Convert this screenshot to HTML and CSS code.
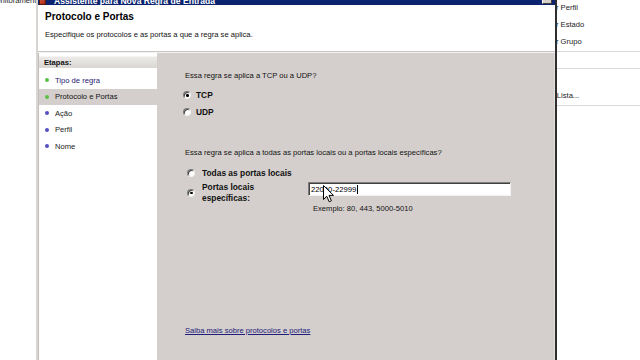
FILE: index.html
```html
<!DOCTYPE html>
<html lang="pt-BR">
<head>
<meta charset="utf-8">
<title>Assistente para Nova Regra de Entrada</title>
<link rel="stylesheet" href="styles.css">
</head>
<body>
<div class="desktop">
  <div class="bgwin">
    <div class="bg-main"><span class="bg-title">Monitoramento</span></div>
    <div class="bg-pane">
      <div class="pane-group g1">
        <div class="pane-item">Filtrar por Perfil</div>
        <div class="pane-item">Filtrar por Estado</div>
        <div class="pane-item">Filtrar por Grupo</div>
      </div>
      <div class="pane-group g2">
        <div class="pane-item">Exibir</div>
      </div>
      <div class="pane-group g3">
        <div class="pane-item">Atualizar</div>
        <div class="pane-item">Exportar Lista...</div>
      </div>
    </div>
  </div>

  <div class="dialog">
    <div class="titlebar">
      <span class="ticon"></span>
      <span class="ttext">Assistente para Nova Regra de Entrada</span>
      <span class="tclose">x</span>
    </div>
    <div class="header">
      <div class="h-title">Protocolo e Portas</div>
      <div class="h-desc">Especifique os protocolos e as portas a que a regra se aplica.</div>
    </div>
    <div class="body">
      <div class="steps">
        <div class="steps-head">Etapas:</div>
        <ul class="steps-list">
          <li class="step done link"><span class="dot"></span>Tipo de regra</li>
          <li class="step done current"><span class="dot"></span>Protocolo e Portas</li>
          <li class="step"><span class="dot"></span>Ação</li>
          <li class="step"><span class="dot"></span>Perfil</li>
          <li class="step"><span class="dot"></span>Nome</li>
        </ul>
      </div>
      <div class="main">
        <p class="question">Essa regra se aplica a TCP ou a UDP?</p>
        <div class="radio-group g-proto">
          <div class="radio-row"><span class="radio checked"></span><span class="rlabel">TCP</span></div>
          <div class="radio-row"><span class="radio"></span><span class="rlabel">UDP</span></div>
        </div>
        <p class="question q2">Essa regra se aplica a todas as portas locais ou a portas locais específicas?</p>
        <div class="ports">
          <div class="radio-row r-all"><span class="radio"></span><span class="rlabel">Todas as portas locais</span></div>
          <div class="port-grid">
            <div class="radio-row r-spec"><span class="radio checked"></span><span class="rlabel">Portas locais<br>específicas:</span></div>
            <div class="field">
              <div class="input"><span class="itext">22000-22999</span><span class="caret"></span></div>
              <div class="example">Exemplo: 80, 443, 5000-5010</div>
              <svg class="pointer" width="12" height="18" viewBox="0 0 12 18"><path d="M0.5 0.5 L0.5 14.5 L3.8 11.3 L6.2 16.8 L8.4 15.8 L6 10.4 L10.5 10.4 Z" fill="#fff" stroke="#000" stroke-width="1" stroke-linejoin="miter"/></svg>
            </div>
          </div>
        </div>
        <a class="learn" href="#">Saiba mais sobre protocolos e portas</a>
      </div>
    </div>
  </div>
</div>
</body>
</html>
```
FILE: styles.css
```css
* { box-sizing: border-box; }
html, body { margin: 0; padding: 0; }
body {
  width: 640px;
  height: 360px;
  overflow: hidden;
  background: #fff;
  font-family: "Liberation Sans", Arial, sans-serif;
  font-size: 7.6px;
  color: #111;
}
.desktop {
  position: relative;
  width: 640px;
  height: 360px;
  overflow: hidden;
}

/* background console window */
.bgwin {
  display: grid;
  grid-template-columns: 1fr 140px;
  height: 360px;
}
.bg-main {
  position: relative;
  overflow: hidden;
}
.bg-title {
  display: block;
  margin-left: -10px;
  margin-top: -4px;
  line-height: 10px;
  font-size: 7.6px;
  color: #222;
}
.bg-pane {
  background: #fff;
  box-shadow: inset 59px 0 0 -57px #ede6dc;
}
.pane-group { border-bottom: 1px solid #d9d9d9; }
.pane-item {
  padding-left: 26px;
  height: 17px;
  line-height: 15px;
  color: #222;
  font-size: 7.6px;
}
.g2 .pane-item { height: 16px; }
.g3 .pane-item { height: 18px; line-height: 17px; }

/* dialog window */
.dialog {
  position: absolute;
  left: 36px;
  top: -15px;
  width: 521px;
  height: 400px;
  border-left: 2px solid #d9d5d2;
  border-right: 2px solid #2e2e2e;
  background: #d4cfcc;
  display: flex;
  flex-direction: column;
}
.titlebar {
  height: 20px;
  flex: none;
  background: #0c2470;
  display: flex;
  align-items: flex-end;
  padding-left: 1px;
  color: #fff;
}
.ticon {
  width: 7px;
  height: 9px;
  background: linear-gradient(135deg, #e06040, #a02818);
  border: 1px solid #5a1a10;
  flex: none;
}
.ttext {
  margin-left: 8px;
  font-weight: bold;
  font-size: 8.6px;
  line-height: 10px;
  margin-bottom: -1px;
  white-space: nowrap;
}
.tclose {
  margin-left: auto;
  margin-right: 3px;
  margin-bottom: 1px;
  width: 10px;
  height: 12px;
  background: #d4d0c8;
  border: 1px solid;
  border-color: #fff #404040 #404040 #fff;
  color: #000;
  font-size: 7px;
  line-height: 9px;
  text-align: center;
  font-weight: bold;
}
.header {
  flex: none;
  height: 47px;
  background: #fff;
  padding: 5px 0 0 7px;
  border-bottom: 1px solid #c9c5c2;
  box-shadow: 0 1px 0 #f4f2f1;
}
.h-title {
  font-size: 10px;
  font-weight: bold;
  line-height: 13px;
  color: #000;
}
.h-desc {
  margin-top: 7px;
  line-height: 10px;
  color: #111;
}
.body {
  flex: 1;
  display: flex;
  margin-top: 1px;
}
.steps {
  width: 119px;
  flex: none;
  background: #fff;
  border-left: 1px solid #c2bebb;
  padding-top: 3px;
}
.steps-head {
  height: 12px;
  line-height: 12px;
  padding-left: 5px;
  font-weight: bold;
  color: #111;
  background: linear-gradient(#eceae8, #d9d6d3);
  border-top: 1px solid #f6f5f4;
}
.steps-list {
  list-style: none;
  margin: 4px 0 0;
  padding: 0;
}
.step {
  height: 16.5px;
  display: flex;
  align-items: center;
  padding-left: 6px;
  color: #222;
}
.step.link { color: #1f2070; }
.step.current { background: #d4cfcc; color: #111; }
.dot {
  width: 4px;
  height: 4px;
  border-radius: 50%;
  background: #5a4fc0;
  margin-right: 6px;
  flex: none;
}
.step.done .dot { background: #5cc04a; }

.main {
  flex: 1;
  padding: 18px 0 0 28px;
  border-right: 1px solid #e2dedb;
  display: flex;
  flex-direction: column;
  align-items: flex-start;
}
.question {
  margin: 0;
  line-height: 10px;
  color: #111;
}
.radio-group {
  margin-top: 9px;
  display: flex;
  flex-direction: column;
  gap: 7px;
}
.radio-row {
  display: flex;
  align-items: center;
  height: 10px;
}
.radio {
  width: 8px;
  height: 8px;
  border-radius: 50%;
  background: #fff;
  border: 1px solid;
  border-color: #7c7a78 #f2f0ee #f2f0ee #7c7a78;
  box-shadow: inset 1px 1px 0 #3e3e3e;
  flex: none;
  margin-left: -2px;
  position: relative;
}
.radio.checked::after {
  content: "";
  position: absolute;
  left: 2px;
  top: 2px;
  width: 2.5px;
  height: 2.5px;
  border-radius: 50%;
  background: #000;
}
.rlabel {
  margin-left: 5px;
  font-weight: bold;
  font-size: 8.4px;
  line-height: 10.5px;
  color: #111;
}
.q2 { margin-top: 31px; }
.ports {
  margin-top: 10px;
  padding-left: 4px;
}
.r-all .rlabel { margin-left: 7px; }
.port-grid {
  margin-top: 4px;
  display: grid;
  grid-template-columns: 119px 203px;
}
.r-spec { height: 21px; }
.r-spec .rlabel { margin-left: 7px; }
.field { position: relative; }
.input {
  height: 14px;
  background: #fff;
  border: 1px solid;
  border-color: #7f7d7b #f4f2f0 #f4f2f0 #7f7d7b;
  box-shadow: inset 1px 1px 0 #404040;
  display: flex;
  align-items: center;
  padding-left: 2px;
  color: #000;
}
.itext { font-size: 7.7px; }
.caret {
  width: 1px;
  height: 9px;
  background: #000;
  margin-left: 1px;
}
.example {
  margin-top: 8px;
  padding-left: 5px;
  line-height: 10px;
  color: #111;
}
.pointer {
  position: absolute;
  left: 15px;
  top: 3px;
}
.learn {
  margin-top: 112px;
  line-height: 10px;
  color: #20207a;
  text-decoration: underline;
}
```
